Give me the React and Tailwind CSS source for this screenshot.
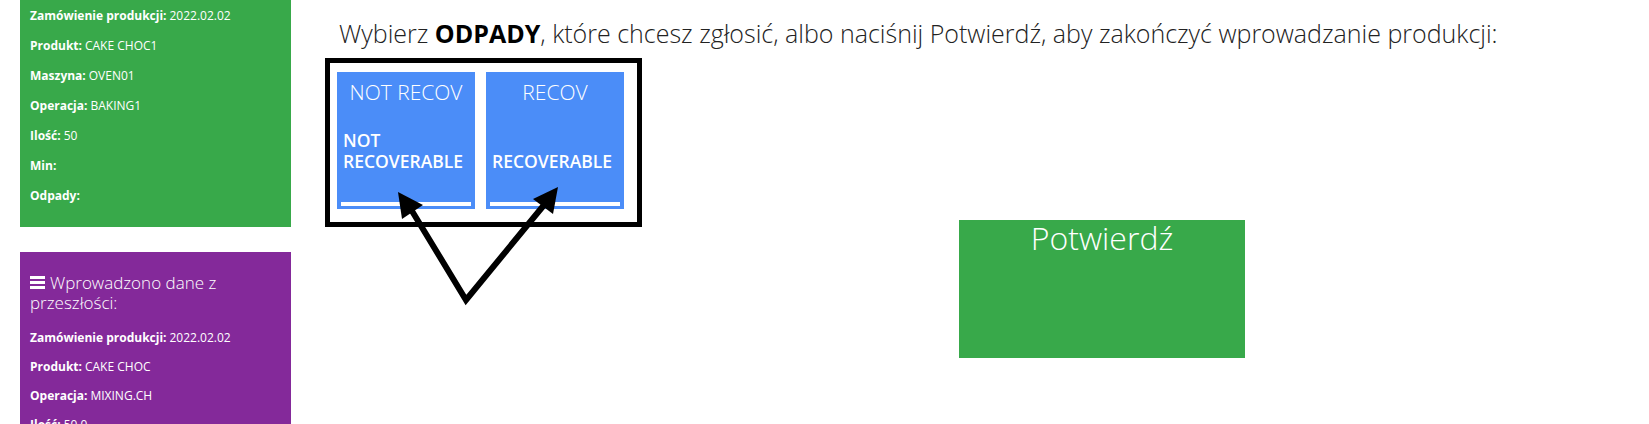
import React from 'react';

const font = { fontFamily: '"Open Sans", "Liberation Sans", sans-serif' };

function InfoLine({ label, value, h = 'h-[30px]' }) {
  return (
    <div className={`${h} flex items-center text-[12px] text-white`}>
      <span className="font-bold">{label}:</span>
      {value ? <span className="ml-[3px]">{value}</span> : null}
    </div>
  );
}

function BarsIcon() {
  return (
    <svg width="15" height="13" viewBox="0 0 15 13" className="inline-block mr-[5px] -mt-[3px]">
      <rect x="0" y="0" width="15" height="3" fill="white" />
      <rect x="0" y="5" width="15" height="3" fill="white" />
      <rect x="0" y="10" width="15" height="3" fill="white" />
    </svg>
  );
}

function WasteTile({ title, lines }) {
  return (
    <button className="w-[138px] h-[137px] bg-[#4b8df8] flex flex-col text-white cursor-pointer">
      <div className="pt-[7px] leading-[27px] text-[21px] font-light text-center">{title}</div>
      <div className="h-[66px] flex items-end pl-[6px]">
        <div className="text-[17.5px] font-semibold leading-[21px] text-left">
          {lines.map((l) => (
            <div key={l}>{l}</div>
          ))}
        </div>
      </div>
      <div className="flex-1" />
      <div className="mx-[4px] mb-[3px] h-[4px] bg-white" />
    </button>
  );
}

export default function App() {
  return (
    <div className="relative w-full h-[424px] overflow-hidden bg-white" style={font}>
      <div className="flex">
        {/* sidebar */}
        <div className="ml-[20px] w-[271px] shrink-0">
          <div className="bg-[#38a94a] px-[10px] pt-[1px] pb-[16px]">
            <InfoLine label="Zamówienie produkcji" value="2022.02.02" />
            <InfoLine label="Produkt" value="CAKE CHOC1" />
            <InfoLine label="Maszyna" value="OVEN01" />
            <InfoLine label="Operacja" value="BAKING1" />
            <InfoLine label="Ilość" value="50" />
            <InfoLine label="Min" />
            <InfoLine label="Odpady" />
          </div>
          <div className="mt-[25px] bg-[#84299a] px-[10px] pt-[21px] pb-[10px]">
            <div className="text-[17px] font-light leading-[19.5px] text-white mb-[11px]">
              <BarsIcon />
              Wprowadzono dane z przeszłości:
            </div>
            <InfoLine label="Zamówienie produkcji" value="2022.02.02" h="h-[29px]" />
            <InfoLine label="Produkt" value="CAKE CHOC" h="h-[29px]" />
            <InfoLine label="Operacja" value="MIXING.CH" h="h-[29px]" />
            <InfoLine label="Ilość" value="50.0" h="h-[29px]" />
          </div>
        </div>

        {/* main */}
        <div className="ml-[34px] pt-[17px] flex-1">
          <h1 className="pl-[14px] text-[25px] leading-[32px] font-light text-[#222]">
            Wybierz <b className="font-bold text-black">ODPADY</b>, które chcesz zgłosić, albo naciśnij Potwierdź, aby zakończyć wprowadzanie produkcji:
          </h1>
          <div className="mt-[9px] flex items-start">
            <div className="border-[5px] border-black pt-[9px] pl-[7px] pr-[13px] pb-[13px] flex gap-[11px]">
              <WasteTile title="NOT RECOV" lines={['NOT', 'RECOVERABLE']} />
              <WasteTile title="RECOV" lines={['RECOVERABLE']} />
            </div>
            <button className="ml-[317px] mt-[162px] w-[286px] h-[138px] bg-[#38a94a] text-white text-[32px] font-light leading-[35px] flex justify-center items-start cursor-pointer">
              Potwierdź
            </button>
          </div>
        </div>
      </div>

      {/* annotation arrows */}
      <svg className="absolute left-0 top-0 pointer-events-none" width="1649" height="424" viewBox="0 0 1649 424">
        <polyline points="412,211 466,300 544,205" fill="none" stroke="black" strokeWidth="6" strokeLinejoin="miter" />
        <polygon points="398,192 423,205 402,219" fill="black" />
        <polygon points="558,187 533,199 553,214" fill="black" />
      </svg>
    </div>
  );
}
